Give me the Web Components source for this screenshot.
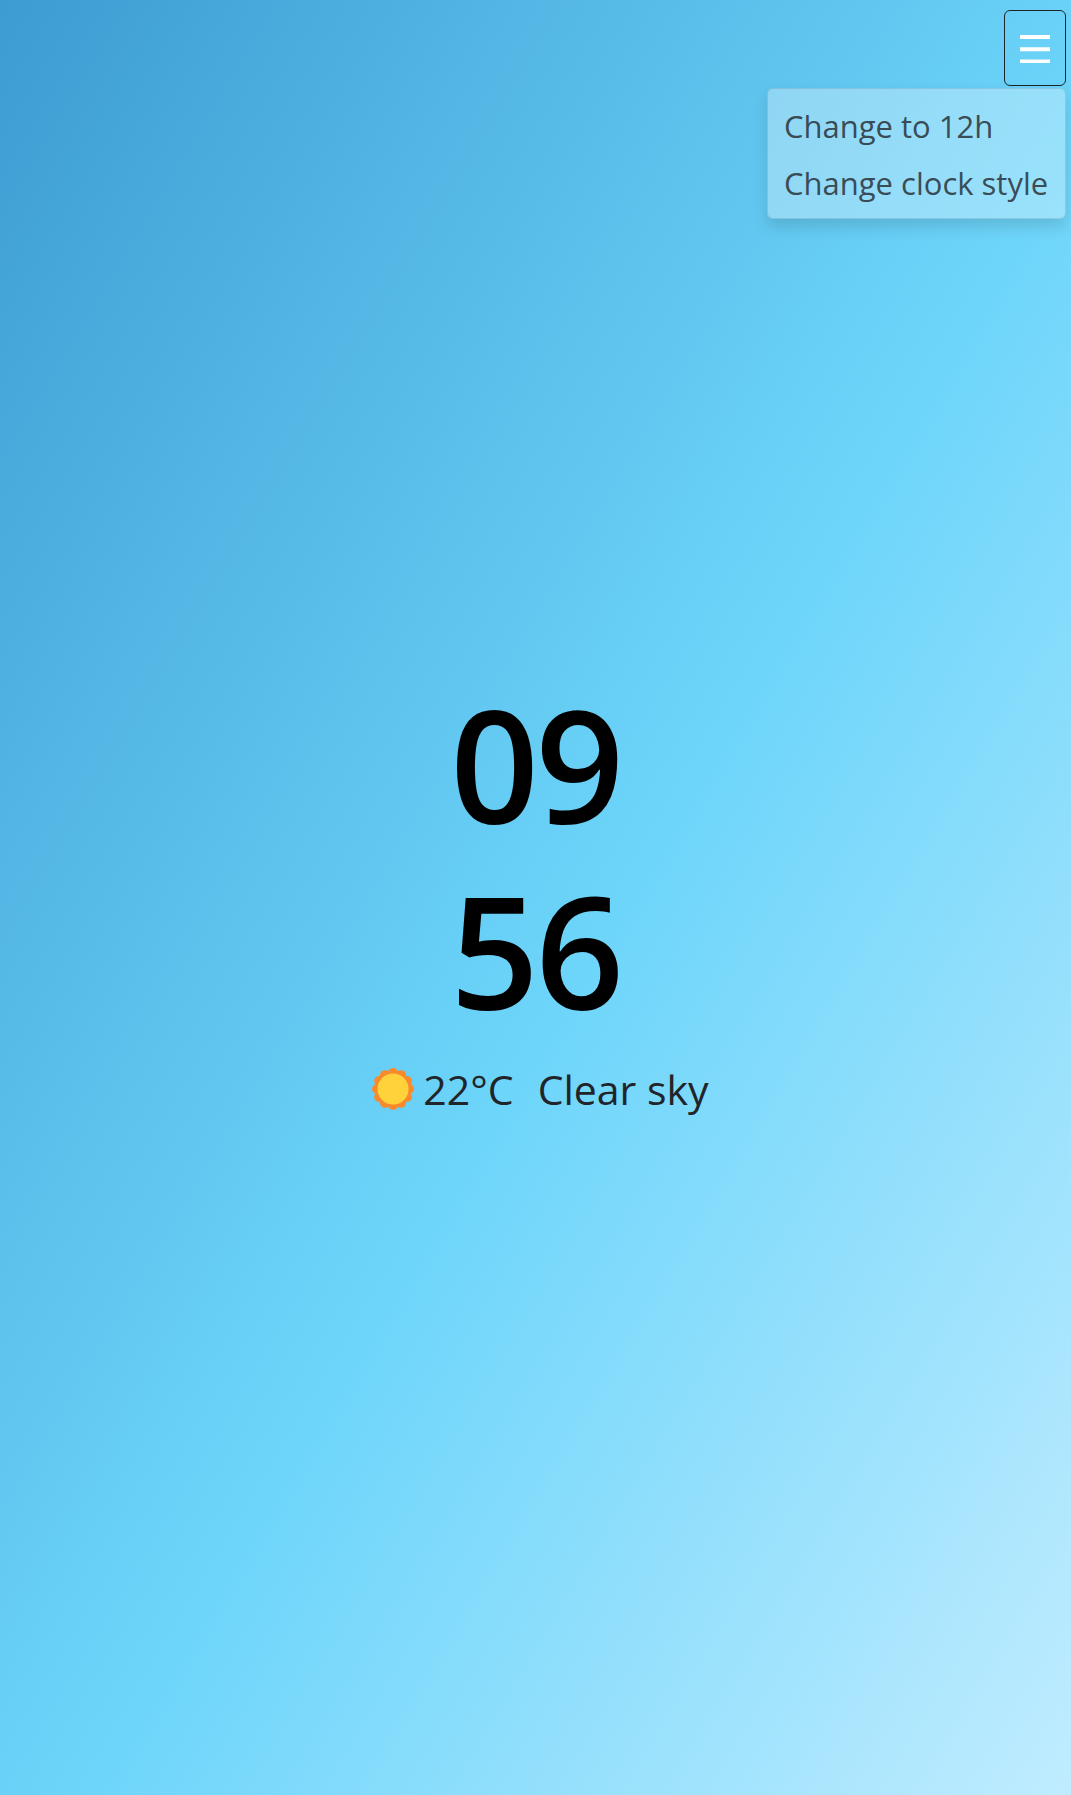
<!DOCTYPE html>
<html lang="en">
<head>
<meta charset="utf-8">
<title>Clock</title>
<style>
  html, body { margin: 0; height: 100%; }
</style>
</head>
<body>
<clock-app>
  <menu-toggle slot="overlay"></menu-toggle>
  <dropdown-menu slot="overlay">
    <menu-item>Change to 12h</menu-item>
    <menu-item>Change clock style</menu-item>
  </dropdown-menu>
  <clock-face hours="09" minutes="56"></clock-face>
  <weather-line temp="22°C" desc="Clear sky"></weather-line>
</clock-app>
<script>
class ClockApp extends HTMLElement {
  constructor() {
    super();
    this.attachShadow({ mode: "open" });
    this.shadowRoot.innerHTML = `
      <style>
        :host {
          display: flex;
          flex-direction: column;
          align-items: center;
          justify-content: center;
          position: relative;
          box-sizing: border-box;
          height: 1795px;
          padding-bottom: 10px;
          overflow: hidden;
          font-family: "Open Sans", "Noto Sans", sans-serif;
          background: linear-gradient(to bottom right, #3d9cd2 0%, #6dd5fa 54%, #c0ecff 100%);
        }
      </style>
      <slot name="overlay"></slot>
      <slot></slot>
    `;
  }
}

class MenuToggle extends HTMLElement {
  constructor() {
    super();
    this.attachShadow({ mode: "open" });
    this.shadowRoot.innerHTML = `
      <style>
        :host {
          position: absolute;
          top: 10px;
          right: 5px;
          box-sizing: border-box;
          width: 62px;
          height: 76px;
          display: flex;
          align-items: center;
          justify-content: center;
          border: 1px solid #212529;
          border-radius: 6px;
        }
        svg { display: block; }
      </style>
      <svg width="30" height="30" viewBox="0 0 30 30" fill="none" stroke="#fff" stroke-width="4">
        <path d="M0 4H30M0 16.3H30M0 28.5H30"/>
      </svg>
    `;
  }
}

class DropdownMenu extends HTMLElement {
  constructor() {
    super();
    this.attachShadow({ mode: "open" });
    this.shadowRoot.innerHTML = `
      <style>
        :host {
          position: absolute;
          top: 88px;
          right: 5px;
          box-sizing: border-box;
          width: 299px;
          height: 131px;
          padding: 9px 0 8px;
          display: flex;
          flex-direction: column;
          background: rgba(255, 255, 255, 0.3);
          border: 1px solid rgba(0, 0, 0, 0.1);
          border-radius: 6px;
          box-shadow: 0 8px 16px rgba(0, 0, 0, 0.13);
        }
      </style>
      <slot></slot>
    `;
  }
}

class MenuItem extends HTMLElement {
  constructor() {
    super();
    this.attachShadow({ mode: "open" });
    this.shadowRoot.innerHTML = `
      <style>
        :host {
          display: block;
          padding: 0 16px;
          height: 57px;
          line-height: 57px;
          font-size: 31px;
          white-space: nowrap;
          color: rgba(33, 37, 41, 0.8);
        }
      </style>
      <slot></slot>
    `;
  }
}

class ClockFace extends HTMLElement {
  constructor() {
    super();
    this.attachShadow({ mode: "open" });
    const h = this.getAttribute("hours");
    const m = this.getAttribute("minutes");
    this.shadowRoot.innerHTML = `
      <style>
        :host {
          display: flex;
          flex-direction: column;
          align-items: center;
          color: #000;
          font-size: 155px;
          font-weight: 600;
          line-height: 186px;
          letter-spacing: -3.5px;
        }
      </style>
      <div>${h}</div>
      <div>${m}</div>
    `;
  }
}

class SunIcon extends HTMLElement {
  constructor() {
    super();
    this.attachShadow({ mode: "open" });
    let bumps = "";
    for (let i = 0; i < 12; i++) {
      const a = (i * Math.PI) / 6;
      const x = (21 + 16 * Math.sin(a)).toFixed(2);
      const y = (21 - 16 * Math.cos(a)).toFixed(2);
      bumps += `<circle cx="${x}" cy="${y}" r="5"/>`;
    }
    this.shadowRoot.innerHTML = `
      <style>
        :host { display: block; width: 42px; height: 42px; }
        svg { display: block; }
      </style>
      <svg width="42" height="42" viewBox="0 0 42 42">
        <g fill="#f98a2c">${bumps}<circle cx="21" cy="21" r="18"/></g>
        <circle cx="21" cy="21" r="15.5" fill="#ffd23c"/>
      </svg>
    `;
  }
}

class WeatherLine extends HTMLElement {
  constructor() {
    super();
    this.attachShadow({ mode: "open" });
    this.shadowRoot.innerHTML = `
      <style>
        :host {
          display: flex;
          align-items: center;
          gap: 9px;
          margin-top: 20px;
          margin-left: 10px;
          font-size: 41px;
          line-height: 54px;
          color: #212529;
          white-space: nowrap;
        }
        .desc { margin-left: 15px; }
      </style>
      <sun-icon></sun-icon>
      <span>${this.getAttribute("temp")}</span>
      <span class="desc">${this.getAttribute("desc")}</span>
    `;
  }
}

customElements.define("clock-app", ClockApp);
customElements.define("menu-toggle", MenuToggle);
customElements.define("dropdown-menu", DropdownMenu);
customElements.define("menu-item", MenuItem);
customElements.define("clock-face", ClockFace);
customElements.define("sun-icon", SunIcon);
customElements.define("weather-line", WeatherLine);
</script>
</body>
</html>
